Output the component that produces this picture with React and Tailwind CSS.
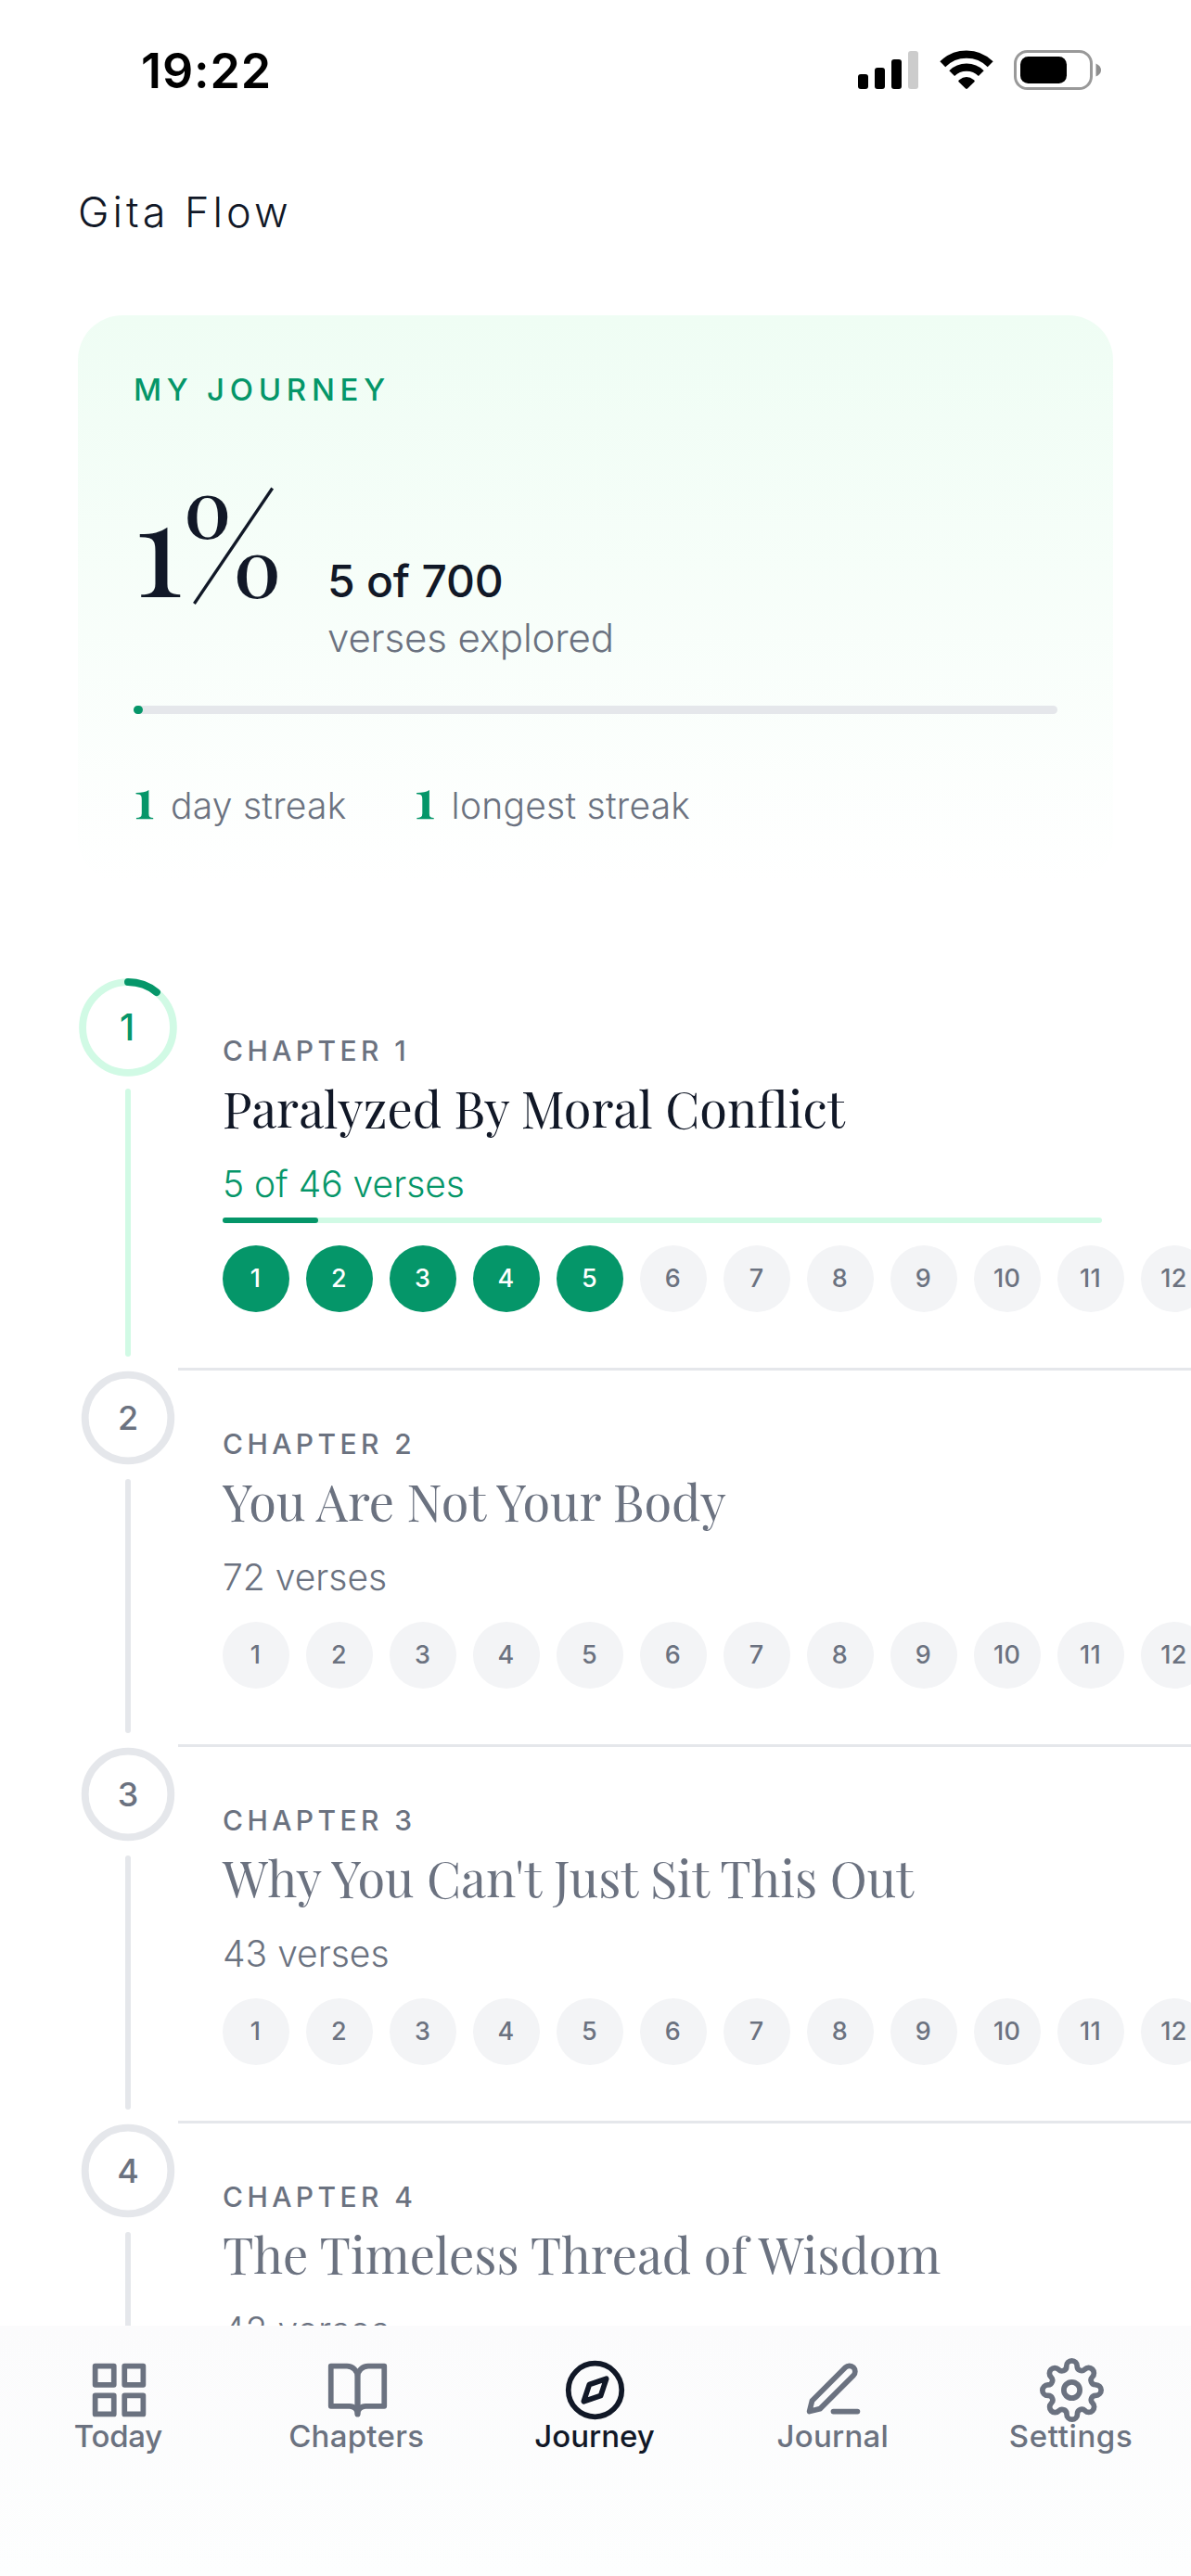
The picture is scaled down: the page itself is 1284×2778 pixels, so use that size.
import React from "react";
import { FiGrid, FiBookOpen, FiCompass, FiEdit3, FiSettings } from "react-icons/fi";

const serif = "font-['Playfair_Display','Liberation_Serif',serif]";

const chapters = [
  { n: 1, title: "Paralyzed By Moral Conflict", verses: 46, read: 5 },
  { n: 2, title: "You Are Not Your Body", verses: 72, read: 0 },
  { n: 3, title: "Why You Can't Just Sit This Out", verses: 43, read: 0 },
  { n: 4, title: "The Timeless Thread of Wisdom", verses: 42, read: 0 },
];

const visibleVerses = Array.from({ length: 12 }, (_, i) => i + 1);

const tabs = [
  { label: "Today", Icon: FiGrid, spacing: "tracking-[-0.2px]" },
  { label: "Chapters", Icon: FiBookOpen, spacing: "tracking-[0.25px]" },
  { label: "Journey", Icon: FiCompass, spacing: "tracking-normal", active: true },
  { label: "Journal", Icon: FiEdit3, spacing: "tracking-[0.25px]" },
  { label: "Settings", Icon: FiSettings, spacing: "tracking-[0.6px]" },
];

function StatusBar() {
  return (
    <div className="flex h-[199px] items-start justify-between pr-[97px] pl-[152px]">
      <span className="mt-[47px] text-[52px] leading-[60px] font-semibold tracking-[0.9px] text-black">19:22</span>
      <div className="mt-[54px] flex items-start">
        <svg width="65" height="43" viewBox="0 0 65 43">
          <rect x="0" y="26" width="11" height="16" rx="3" />
          <rect x="18" y="19" width="11" height="23" rx="3" />
          <rect x="36" y="10" width="11" height="32" rx="3" />
          <rect x="54" y="1" width="11" height="41" rx="3" fill="#ccc" />
        </svg>
        <svg className="ml-[22px]" width="60" height="43" viewBox="0 0 60 43">
          <path d="M4.3 15.2 A36.5 36.5 0 0 1 55.700 15.2" fill="none" stroke="#000" strokeWidth="8.4" />
          <path d="M14.2 25.2 A22.5 22.5 0 0 1 45.800 25.2" fill="none" stroke="#000" strokeWidth="8.2" />
          <path d="M21.3 34 Q21 33 22 32.2 Q30 26 38 32.2 Q39 33 38.7 34 L31 41.6 Q30 42.4 29 41.6 Z" />
        </svg>
        <svg className="ml-[18px]" width="97" height="43" viewBox="0 0 97 43">
          <rect x="4.500" y="1.500" width="82" height="40" rx="13" fill="none" stroke="#999" strokeWidth="3" />
          <rect x="10" y="7" width="50" height="29" rx="8.500" />
          <path d="M91.500 14.500 Q97 17 97 21.500 Q97 26 91.500 28.500 Z" fill="#8e8e8e" />
        </svg>
      </div>
    </div>
  );
}

function Streak({ count, label }) {
  return (
    <div className="flex items-baseline gap-[17px]">
      <span className={`text-[60px] font-semibold text-[#059669] ${serif}`}>{count}</span>
      <span>{label}</span>
    </div>
  );
}

function JourneyCard() {
  return (
    <section className="mx-[84px] mt-[81px] h-[612px] rounded-[48px] bg-linear-to-b from-[#effdf4] to-white px-[60px] pt-[60px]">
      <h2 className="text-[33px] leading-[40px] font-medium tracking-[5.7px] text-[#059669]">MY JOURNEY</h2>

      <div className="mt-[60px] flex items-start">
        <div className={`mt-[14px] w-[209px] text-[144px] leading-[140px] text-[#111827] ${serif}`}>1%</div>
        <div className="pt-[97px]">
          <div className="text-[48px] leading-[60px] font-medium tracking-[-0.2px] text-[#111827]">5 of 700</div>
          <div className="mt-[5px] text-[42px] leading-[51px] font-light tracking-[-0.15px] text-[#6b7280]">
            verses explored
          </div>
        </div>
      </div>

      <div className="mt-[48px] h-[9px] rounded-full bg-[#e5e7eb]">
        <div className="h-[9px] w-[10px] rounded-full bg-[#059669]" />
      </div>

      <div className="mt-[58px] flex items-baseline gap-[73px] text-[39px] leading-[60px] font-light tracking-[0.25px] text-[#6b7280]">
        <Streak count={1} label="day streak" />
        <Streak count={1} label="longest streak" />
      </div>
    </section>
  );
}

function Marker({ chapter }) {
  const started = chapter.read > 0;
  const size = started ? 108 : 102;
  const mid = size / 2;
  const r = started ? 48.9 : 46.3;
  const length = 2 * Math.PI * r;
  return (
    <div className="flex w-[108px] shrink-0 flex-col items-center">
      <div className="grid place-items-center">
        <svg className="col-start-1 row-start-1" width={size} height={size} viewBox={`0 0 ${size} ${size}`}>
          <circle cx={mid} cy={mid} r={r} fill="none" stroke={started ? "#d1fae5" : "#e5e7eb"} strokeWidth="7.8" />
          {started && (
            <circle
              cx={mid}
              cy={mid}
              r={r}
              fill="none"
              stroke="#059669"
              strokeWidth="8"
              strokeLinecap="round"
              strokeDasharray={`${(length * chapter.read) / chapter.verses} ${length}`}
              transform={`rotate(-90 ${mid} ${mid})`}
            />
          )}
        </svg>
        <span
          className={
            started
              ? "col-start-1 row-start-1 pr-0.5 text-[39px] font-medium text-[#059669]"
              : "col-start-1 row-start-1 text-[36px] font-medium text-[#6b7280]"
          }
        >
          {chapter.n}
        </span>
      </div>
      <div
        className={
          started
            ? "mt-3 mb-[15px] w-[6px] flex-1 rounded-full bg-[#d1fae5]"
            : "mt-[15px] mb-[15px] w-[6px] flex-1 rounded-full bg-[#e5e7eb]"
        }
      />
    </div>
  );
}

function ChapterRow({ chapter }) {
  const started = chapter.read > 0;
  return (
    <li className="flex">
      <Marker chapter={chapter} />
      <div className="min-w-0 flex-1 border-b-[3px] border-[#e5e7eb] pt-[59px] pb-[60px] pl-[48px]">
        <div className="text-[30px] leading-[40px] font-medium tracking-[4.4px] text-[#6b7280]">CHAPTER {chapter.n}</div>
        <h3
          className={`mt-[6px] text-[54px] leading-[72px] whitespace-nowrap [font-kerning:normal] [text-rendering:optimizeLegibility] ${serif} ${
            started ? "text-[#111827]" : "text-[#6b7280]"
          }`}
        >
          {chapter.title}
        </h3>
        <div className={`mt-[22px] text-[39px] leading-[48px] font-light ${started ? "text-[#059669]" : "text-[#6b7280]"}`}>
          {started ? `${chapter.read} of ${chapter.verses} verses` : `${chapter.verses} verses`}
        </div>
        {started && (
          <div className="mt-3 h-[6px] w-[948px] rounded-full bg-[#d1fae5]">
            <div
              className="h-[6px] rounded-full bg-[#059669]"
              style={{ width: `${(chapter.read / chapter.verses) * 100}%` }}
            />
          </div>
        )}
        <div className="mt-6 flex gap-[18px] overflow-hidden">
          {visibleVerses.map((v) => (
            <span
              key={v}
              className={`flex size-[72px] shrink-0 items-center justify-center rounded-full pr-px text-[27px] font-medium tracking-[0.3px] ${
                v <= chapter.read ? "bg-[#059669] text-white" : "bg-[#f3f4f6] text-[#6b7280]"
              }`}
            >
              {v}
            </span>
          ))}
        </div>
      </div>
    </li>
  );
}

function TabBar() {
  return (
    <nav className="absolute inset-x-0 bottom-0 grid h-[270px] grid-cols-5 bg-linear-to-b from-[#fbfbfc] to-[#fdfefe] pt-[34.5px]">
      {tabs.map(({ label, Icon, spacing, active }) => (
        <div key={label} className={`flex flex-col items-center ${active ? "text-[#111827]" : "text-[#6b7280]"}`}>
          <Icon className="size-[69px]" />
          <span className={`-mt-[5px] pr-0.5 text-[33px] leading-[40px] font-medium ${spacing}`}>{label}</span>
        </div>
      ))}
    </nav>
  );
}

export default function App() {
  return (
    <div className="relative h-[2778px] w-[1284px] overflow-hidden bg-white font-['Inter',sans-serif]">
      <StatusBar />
      <h1 className="pl-[84px] text-[45px] leading-[60px] font-light tracking-[4px] text-[#111827]">Gita Flow</h1>
      <JourneyCard />
      <ul className="mt-[102px] pl-[84px]">
        {chapters.map((c) => (
          <ChapterRow key={c.n} chapter={c} />
        ))}
      </ul>
      <TabBar />
    </div>
  );
}
